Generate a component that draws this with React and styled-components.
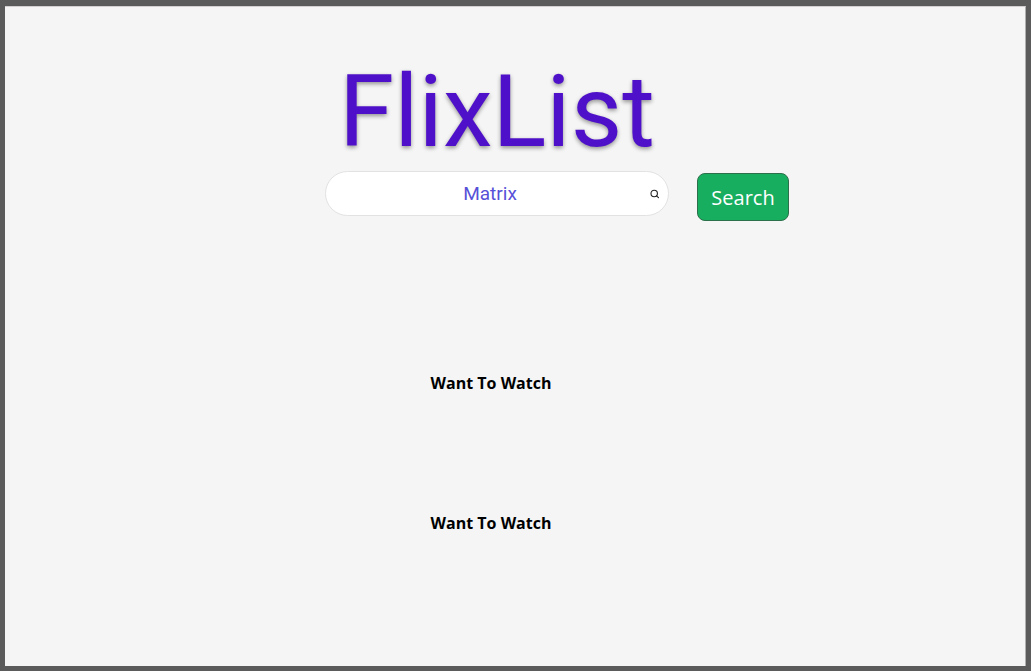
import React from 'react';
import styled, { createGlobalStyle } from 'styled-components';

const GlobalStyle = createGlobalStyle`
  *, *::before, *::after { box-sizing: border-box; }
  body { margin: 0; background: #5b5b5b; }
`;

const Page = styled.div`
  min-height: 100vh;
  padding: 6px 5px 5px;
  display: flex;
  background: #5b5b5b;
`;

const Screen = styled.main`
  flex: 1;
  padding: 46px 36px 40px 0;
  background: #f5f5f5;
  border-top: 1px solid #d4d0d2;
  border-right: 1px solid #b0b0b0;
`;

const Title = styled.h1`
  margin: 0;
  text-align: center;
  font: 400 100px/118px Roboto, sans-serif;
  color: #4e10c8;
  text-shadow: 0 2px 4px rgba(0, 0, 0, 0.4);
`;

const SearchForm = styled.form`
  display: grid;
  grid-template-columns: 1fr minmax(0, 344px) 1fr;
  column-gap: 28px;
  align-items: start;
`;

const SearchField = styled.label`
  grid-column: 2;
  display: grid;
  align-items: center;
  height: 45px;
  background: #fff;
  border: 1px solid #e2e2e2;
  border-radius: 23px;

  > * { grid-area: 1 / 1; }
`;

const SearchInput = styled.input`
  width: 100%;
  height: 43px;
  padding: 0 36px 0 22px;
  border: 0;
  border-radius: 23px;
  outline: 0;
  background: transparent;
  text-align: center;
  font: 400 19px/22px Roboto, sans-serif;
  color: #5751d8;
`;

const SearchIcon = styled.svg`
  justify-self: end;
  width: 10px;
  height: 10px;
  margin-right: 8px;
  pointer-events: none;
`;

const SearchButton = styled.button`
  justify-self: start;
  min-width: 92px;
  height: 48px;
  margin-top: 2px;
  padding: 2px 12px 0;
  border: 1px solid #2b704a;
  border-radius: 8px;
  background: #18ae5f;
  color: #fff;
  font: 400 20px/28px "Open Sans", sans-serif;
  cursor: pointer;
`;

const Lists = styled.div`
  display: grid;
  row-gap: 112px;
  margin-top: 148px;
  padding-right: 12px;
`;

const ListTitle = styled.h2`
  margin: 0;
  text-align: center;
  font: 700 16px/28px "Open Sans", sans-serif;
  color: #000;
`;

const lists = ['Want To Watch', 'Want To Watch'];

export default function App() {
  return (
    <>
      <GlobalStyle />
      <Page>
        <Screen>
          <Title>FlixList</Title>
          <SearchForm onSubmit={(event) => event.preventDefault()}>
            <SearchField>
              <SearchInput type="text" aria-label="Movie title" defaultValue="Matrix" />
              <SearchIcon viewBox="0 0 10 10" fill="none" stroke="#222" strokeWidth="1.1" aria-hidden="true">
                <circle cx="4.2" cy="4.5" r="3.2" />
                <path d="M6.5 6.8 L8.5 8.6" strokeLinecap="round" />
              </SearchIcon>
            </SearchField>
            <SearchButton type="submit">Search</SearchButton>
          </SearchForm>
          <Lists>
            {lists.map((name, index) => (
              <section key={index}>
                <ListTitle>{name}</ListTitle>
              </section>
            ))}
          </Lists>
        </Screen>
      </Page>
    </>
  );
}
